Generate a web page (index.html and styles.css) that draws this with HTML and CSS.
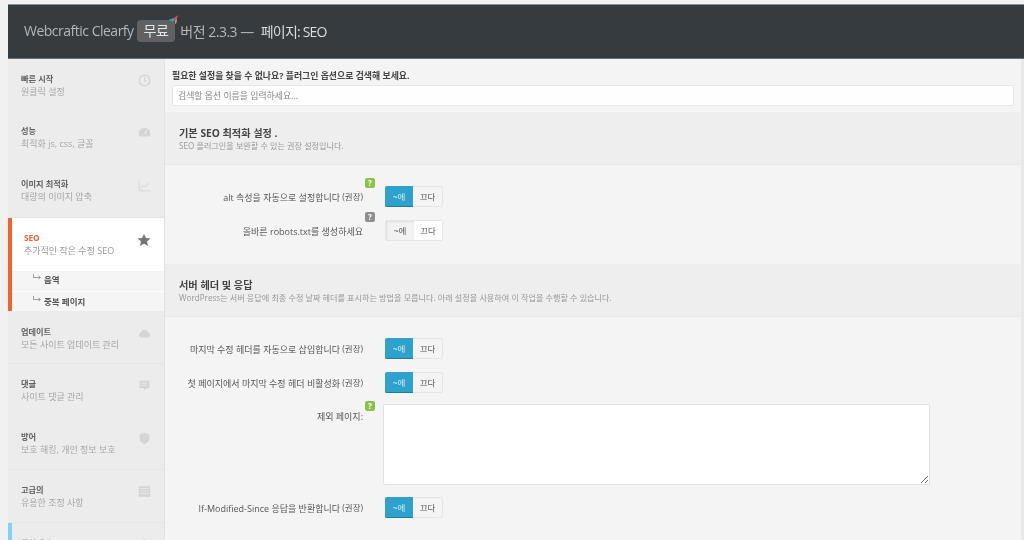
FILE: index.html
```html
<!DOCTYPE html>
<html lang="ko">
<head>
<meta charset="utf-8">
<title>Webcraftic Clearfy</title>
<link rel="stylesheet" href="styles.css">
</head>
<body>
<div class="app">
  <header class="topbar">
    <span class="brand">Webcraftic Clearfy</span>
    <span class="plan">무료
      <svg class="spark" viewBox="0 0 12 12" width="12" height="12"><path d="M0 4.500 5 3 6 6 2 6.500z" fill="#2f9fd0"/><path d="M5 3 9 0 8 3.500 6 6z" fill="#d9534f"/><path d="M6 6 8 3.500 7.500 8 6 9z" fill="#e0a030"/></svg>
    </span>
    <span class="version">버전 2.3.3 —</span>
    <span class="page">페이지: SEO</span>
  </header>
  <div class="body">
    <nav class="side">
      <a class="item"><span class="txt"><b>빠른 시작</b><i>원클릭 설정</i></span>
        <svg class="ico" viewBox="0 0 16 16"><circle cx="8" cy="8" r="6.500" fill="none" stroke="currentColor" stroke-width="1.600"/><path d="M8 4V8.500H11" fill="none" stroke="currentColor" stroke-width="1.300"/></svg></a>
      <a class="item up"><span class="txt"><b>성능</b><i>최적화 js, css, 글꼴</i></span>
        <svg class="ico" viewBox="0 0 16 16"><path d="M1 13V9a7 7 0 0 1 14 0v4z" fill="currentColor"/><path d="M8 10 11 5.500" stroke="#ececec" stroke-width="1.500"/></svg></a>
      <a class="item line up"><span class="txt"><b>이미지 최적화</b><i>대량의 이미지 압축</i></span>
        <svg class="ico" viewBox="0 0 16 16"><path d="M1.500 2V14.500H15" fill="none" stroke="currentColor"/><path d="M3 12 6.500 8 9 10 14 3.500" fill="none" stroke="currentColor" stroke-width="1.200"/></svg></a>
      <div class="active-group">
        <a class="item current"><span class="txt"><b>SEO</b><i>추가적인 작은 수정 SEO</i></span>
          <svg class="ico star" viewBox="0 0 16 16"><path d="M8 .8 10.200 5.600 15.400 6.200 11.500 9.700 12.600 14.900 8 12.300 3.400 14.900 4.500 9.700.6 6.200 5.800 5.600z" fill="currentColor"/></svg></a>
        <a class="sub lift"><svg class="arrow" viewBox="0 0 8 6"><path d="M.5 0V3.500H7M5.500 2 7.500 3.500 5.500 5" fill="none" stroke="currentColor" stroke-width=".8"/></svg>음역</a>
        <a class="sub"><svg class="arrow" viewBox="0 0 8 6"><path d="M.5 0V3.500H7M5.500 2 7.500 3.500 5.500 5" fill="none" stroke="currentColor" stroke-width=".8"/></svg>중복 페이지</a>
      </div>
      <a class="item line down"><span class="txt"><b>업데이트</b><i>모든 사이트 업데이트 관리</i></span>
        <svg class="ico" viewBox="0 0 16 16"><path d="M4 13a3 3 0 0 1-.6-5.900A4.600 4.600 0 0 1 12.200 6.500 3.300 3.300 0 0 1 12.500 13z" fill="currentColor"/></svg></a>
      <a class="item"><span class="txt"><b>댓글</b><i>사이트 댓글 관리</i></span>
        <svg class="ico" viewBox="0 0 16 16"><path d="M2 2H14V11H10L8 14 7 11H2z" fill="currentColor"/><path d="M4 5H12M4 8H10" stroke="#ececec" stroke-width="1"/></svg></a>
      <a class="item line"><span class="txt"><b>방어</b><i>보호 해킹, 개인 정보 보호</i></span>
        <svg class="ico" viewBox="0 0 16 16"><path d="M8 1 14 3V8C14 11.500 11 14 8 15 5 14 2 11.500 2 8V3z" fill="currentColor"/></svg></a>
      <a class="item line"><span class="txt"><b>고급의</b><i>유용한 조정 사항</i></span>
        <svg class="ico wide" viewBox="0 0 16 16"><path d="M1 1.500H15V14.500H1z" fill="currentColor"/><path d="M3 4.500H13M3 7.500H13M3 10.500H13" stroke="#ececec"/></svg></a>
      <a class="item blue"><span class="txt"><b>구성 요소</b><i>구성 요소</i></span>
        <svg class="ico" viewBox="0 0 16 16"><path d="M8 1 14 8H2z" fill="currentColor"/></svg></a>
    </nav>
    <main class="main">
      <div class="search">
        <label class="search-label">필요한 설정을 찾을 수 없나요? 플러그인 옵션으로 검색해 보세요.</label>
        <input class="search-input" type="text" placeholder="검색할 옵션 이름을 입력하세요...">
      </div>
      <section class="head">
        <h2>기본 SEO 최적화 설정 .</h2>
        <p>SEO 플러그인을 보완할 수 있는 권장 설정입니다.</p>
      </section>
      <div class="rows first">
        <div class="row">
          <label class="lbl">alt 속성을 자동으로 설정합니다 <sup>(권장)</sup><span class="q green">?</span></label>
          <div class="sw on"><span class="a">~에</span><span class="b">끄다</span></div>
        </div>
        <div class="row">
          <label class="lbl">올바른 robots.txt를 생성하세요<span class="q grey">?</span></label>
          <div class="sw off"><span class="a">~에</span><span class="b">끄다</span></div>
        </div>
      </div>
      <section class="head">
        <h2>서버 헤더 및 응답</h2>
        <p>WordPress는 서버 응답에 최종 수정 날짜 헤더를 표시하는 방법을 모릅니다. 아래 설정을 사용하여 이 작업을 수행할 수 있습니다.</p>
      </section>
      <div class="rows">
        <div class="row">
          <label class="lbl">마지막 수정 헤더를 자동으로 삽입합니다 <sup>(권장)</sup></label>
          <div class="sw on"><span class="a">~에</span><span class="b">끄다</span></div>
        </div>
        <div class="row">
          <label class="lbl">첫 페이지에서 마지막 수정 헤더 비활성화 <sup>(권장)</sup></label>
          <div class="sw on"><span class="a">~에</span><span class="b">끄다</span></div>
        </div>
        <div class="row tall">
          <label class="lbl">제외 페이지:<span class="q green">?</span></label>
          <textarea class="area"></textarea>
        </div>
        <div class="row">
          <label class="lbl">If-Modified-Since 응답을 반환합니다 <sup>(권장)</sup></label>
          <div class="sw on"><span class="a">~에</span><span class="b">끄다</span></div>
        </div>
      </div>
    </main>
  </div>
</div>
</body>
</html>
```
FILE: styles.css
```css
* { box-sizing: border-box; }
html, body { margin: 0; height: 540px; overflow: hidden; background: #f1f1f1; }
body { padding: 4px 0 0 8px; font-family: "Open Sans", "Noto Sans CJK KR", sans-serif; color: #555; filter: blur(.45px); }
.app { width: 1016px; }

.topbar { height: 55px; background: #363b3f; border-top: 1px solid #8d8f91; border-bottom: 1px solid #6d7073; display: flex; align-items: center; padding: 0 0 2px 16px; color: #b4b6b8; font-size: 14px; letter-spacing: -.5px; white-space: nowrap; }
.plan { position: relative; margin-left: 3px; background: #5f6163; color: #e4e4e4; border-radius: 4px; height: 22px; line-height: 21px; padding: 0 7px; }
.spark { position: absolute; right: -6px; top: -5px; }
.version { margin-left: 5px; }
.page { margin-left: 7px; color: #dcdddd; letter-spacing: -.8px; }

.body { display: flex; height: 481px; }
.side { width: 157px; flex: none; background: #ececec; border-right: 1px solid #e2e2e2; }
.item { height: 53px; display: flex; justify-content: space-between; padding: 13px 13px 0 13px; }
.item.up { padding-top: 12px; }
.item.down { padding-top: 14px; }
.item.line { border-bottom: 1px solid #e5e5e5; }
.txt { display: flex; flex-direction: column; font-size: 8.200px; line-height: 13px; }
.txt b { font-weight: 700; color: #606060; }
.txt i { font-style: normal; color: #a8a8a8; font-size: 9px; }
.ico { width: 13px; height: 13px; color: #d5d5d5; flex: none; margin-top: 2px; }
.ico.wide { width: 15px; margin-right: -1px; }
.active-group { border-left: 4px solid #f4622a; }
.current { background: #fff; padding-left: 12px; height: 52px; }
.current b { color: #f4622a; }
.current i { color: #999; }
.star { width: 14px; height: 14px; color: #777; }
.sub { display: flex; align-items: center; height: 20.500px; background: #f5f5f5; border-top: 1px solid #fff; padding-left: 21px; font-size: 8.500px; font-weight: 700; color: #555; }
.sub.lift { padding-bottom: 3px; }
.arrow { width: 8px; height: 6px; color: #888; margin-right: 3px; position: relative; top: -2px; }
.blue { border-left: 4px solid #7fd4f2; padding-left: 9px; }
.blue b { color: #aaa; }

.main { flex: 1; background: #f4f4f4; border-right: 3px solid #e8e8e8; }
.search { height: 53px; padding: 10px 7px 0 7px; }
.search-label { display: block; font-size: 8.900px; line-height: 13px; font-weight: 700; color: #444; margin-bottom: 3px; }
.search-input { display: block; width: 100%; height: 21px; border: 1px solid #e6e6e6; border-radius: 2px; background: #fefefe; font: 8.900px "Open Sans", "Noto Sans CJK KR", sans-serif; padding: 0 5px; outline: 0; }
.search-input::placeholder { color: #888; }

.head { height: 53px; background: #eeeeee; border-bottom: 1px solid #e8e8e8; padding: 14px 14px 0; }
.head h2 { margin: 0; font-size: 10.200px; line-height: 14px; font-weight: 700; color: #444; }
.head p { margin: 0; font-size: 8.130px; line-height: 11px; color: #999; }

.rows { padding: 21px 0 0; }
.rows.first { height: 99px; }
.row { display: flex; align-items: center; height: 21px; margin-bottom: 13px; }
.row.tall { align-items: flex-start; height: 81px; margin: -2px 0 12px; }
.lbl { position: relative; width: 198px; padding-top: 2px; text-align: right; font-size: 9px; line-height: 14px; color: #555; white-space: nowrap; flex: none; }
.lbl sup { font-size: 8.500px; vertical-align: 1px; line-height: 0; }
.row.tall .lbl { padding-top: 6px; }
.q { position: absolute; right: -12px; top: -11px; width: 10px; height: 10px; border-radius: 2px; color: #fff; font-size: 8px; font-weight: 700; line-height: 10px; text-align: center; }
.row.tall .q { top: -3px; }
.green { background: #8bc34a; }
.grey { background: #8e8e8e; }
.sw { margin-left: 22px; width: 58px; height: 21px; display: flex; border: 1px solid #e6e6e6; border-radius: 2px; font-size: 8.500px; line-height: 19px; text-align: center; background: #f4f4f4; }
.sw span { display: block; }
.a { width: 28px; }
.b { flex: 1; }
.on .a { background: #2ea2cc; color: #d6eef7; border-radius: 2px 0 0 2px; box-shadow: inset 0 -1px 0 #1e7ea1; margin: -1px 0 -1px -1px; height: 21px; line-height: 21px; }
.off .a { background: #f2f2f2; box-shadow: inset 1px 1px 2px #ddd; }
.off .b { background: #fff; }
.area { display: block; margin-left: 20px; width: 547px; height: 81px; background: #fff; border: 1px solid #e2e2e2; border-radius: 2px; outline: 0; resize: both; }
```
